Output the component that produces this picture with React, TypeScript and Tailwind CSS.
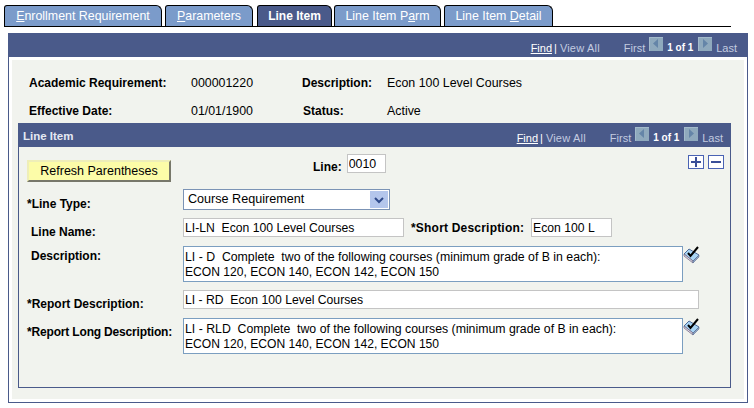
import React from 'react';

const Nav = ({ right }: { right: string }) => (
  <div className={`ml-auto flex items-start self-stretch whitespace-nowrap text-[11px] font-normal leading-[14px] text-[#c3cbe0] ${right}`}>
    <span className="mt-[8px] text-white underline">Find</span>
    <span className="ml-[2px] mr-[3px] mt-[8px] text-white">|</span>
    <span className="mt-[8px] tracking-[0.2px]">View All</span>
    <span className="ml-[24px] mt-[8px]">First</span>
    <Arrow dir="left" />
    <span className="ml-[4px] mr-[1px] mt-[8px] w-[26px] text-[10px] font-bold text-white">1 of 1</span>
    <Arrow dir="right" />
    <span className="ml-[4px] mt-[8px]">Last</span>
  </div>
);

const Arrow = ({ dir }: { dir: 'left' | 'right' }) => (
  <svg width="14" height="14" viewBox="0 0 14 14" className="ml-1 mt-[4px]">
    <rect width="14" height="14" fill="#8fa9bd" />
    <path d="M0 0h14v1H1v13H0z" fill="#a3bacb" />
    <path d={dir === 'left' ? 'M9 2v9L4 6.5z' : 'M5 2v9l5-4.5z'} fill="#6585a8" />
  </svg>
);

const Book = () => (
  <svg width="17" height="18" viewBox="0 0 17 18" className="shrink-0">
    <path d="M1 8l5-5 10 6-6 6z" fill="#a8d4f4" stroke="#4f6a98" />
    <path d="M1 8l9 7v2L1 10z" fill="#dcd4e4" stroke="#77718a" strokeWidth="0.8" />
    <path d="M10 15l6-6v2l-6 6z" fill="#8fa6c4" stroke="#5d6f94" strokeWidth="0.6" />
    <path d="M5 7l2.5 3L15 1" fill="none" stroke="#000" strokeWidth="2" />
  </svg>
);

const Label = ({ className = '', children }: { className?: string; children: React.ReactNode }) => (
  <span className={`font-bold text-black text-[12px] ${className}`}>{children}</span>
);

const LongText = ({ first, second }: { first: string; second: string }) => (
  <div className="h-[36px] w-[500px] whitespace-pre border border-[#7b9ec0] bg-white pl-[1px] pt-[3px] leading-[15px]">
    <div className="text-[12.3px]">{first}</div>
    <div className="text-[12.1px]">{second}</div>
  </div>
);

const App = () => {
  const tab = 'flex h-[21px] items-center justify-center rounded-tl-[3px] rounded-tr-[6px] border border-b-0 border-black';

  return (
    <div className="h-[408px] w-[754px] overflow-hidden bg-white font-['Liberation_Sans',Arial,sans-serif] text-[12px] text-black">
      {/* tabs */}
      <div className="ml-[4px] mt-[5px] flex h-[22px] w-[727px] border-b border-black text-[12.4px] text-white">
        <div className={`${tab} w-[158px] bg-[#7b9bca]`}>
          <span><u>E</u>nrollment Requirement</span>
        </div>
        <div className={`${tab} ml-[3px] w-[88px] bg-[#7b9bca]`}>
          <span><u>P</u>arameters</span>
        </div>
        <div className={`${tab} ml-[4px] w-[75px] bg-[#4a5a8a] text-[12px] font-bold`}>
          Line Item
        </div>
        <div className={`${tab} ml-[2px] w-[107px] bg-[#7b9bca]`}>
          <span>Line Item P<u>a</u>rm</span>
        </div>
        <div className={`${tab} ml-[3px] w-[109px] bg-[#7b9bca]`}>
          <span>Line Item <u>D</u>etail</span>
        </div>
      </div>

      {/* outer panel */}
      <div className="ml-[8px] mt-[6px] h-[370px] w-[740px] border border-t-0 border-[#4a5a8a]">
        <div className="flex h-[24px] items-center bg-[#4a5a8a]">
          <Nav right="mr-[10px]" />
        </div>
        <div className="mx-[3px] mt-[3px] h-[339px] bg-[#f1f3ee] pt-[14px]">
          <div className="flex h-[18px] items-center">
            <Label className="ml-[17px] w-[162px]">Academic Requirement:</Label>
            <span className="w-[111px] text-[12.4px]">000001220</span>
            <Label className="w-[85px]">Description:</Label>
            <span className="text-[12.4px]">Econ 100 Level Courses</span>
          </div>
          <div className="mt-[10px] flex h-[18px] items-center">
            <Label className="ml-[17px] w-[162px]">Effective Date:</Label>
            <span className="w-[112px] text-[12.4px]">01/01/1900</span>
            <Label className="w-[84px]">Status:</Label>
            <span className="text-[12.4px]">Active</span>
          </div>

          {/* inner panel */}
          <div className="ml-[6px] mt-[3px] h-[265px] w-[713px] border border-t-0 border-[#4a5a8a]">
            <div className="flex h-[24px] items-center bg-[#4a5a8a] pl-[4px] text-[11.5px] font-bold text-[#e4e8f2]">
              <span className="mt-[4px]">Line Item</span>
              <Nav right="mr-[7px]" />
            </div>

            <div className="h-[240px]">
              <div className="flex h-[42px] pt-[7px]">
                <button className="ml-[8px] mt-[6px] h-[22px] w-[144px] border-2 border-b-[#77776a] border-l-[#eeeeb8] border-r-[#77776a] border-t-[#eeeeb8] bg-[#fcfca8] text-[12.5px]">
                  Refresh Parentheses
                </button>
                <Label className="ml-[142px] mt-[4px]">Line:</Label>
                <input readOnly value="0010" className="ml-[5px] h-[19px] w-[39px] border border-[#c4c4c4] bg-white px-[1px] text-[12.4px] outline-none" />
                <div className="ml-[302px] mt-[1px] flex h-[14px] gap-[4px]">
                  <span className="flex h-[14px] w-[16px] items-center justify-center border border-[#4a63b4] bg-white text-[#3a4f98]">
                    <svg width="10" height="10" viewBox="0 0 10 10"><path d="M4 0h2v4h4v2H6v4H4V6H0V4h4z" fill="currentColor" /></svg>
                  </span>
                  <span className="flex h-[14px] w-[16px] items-center justify-center border border-[#4a63b4] bg-white text-[#3a4f98]">
                    <svg width="10" height="10" viewBox="0 0 10 10"><path d="M0 4h10v2H0z" fill="currentColor" /></svg>
                  </span>
                </div>
              </div>

              <div className="flex h-[21px] items-start">
                <Label className="ml-[8px] mt-[6px] w-[156px]">*Line Type:</Label>
                <div className="flex h-[21px] w-[207px] items-center justify-between border border-[#7b93b5] bg-white pl-[4px] pr-[1px] text-[12.6px]">
                  <span>Course Requirement</span>
                  <span className="flex h-[17px] w-[18px] items-center justify-center bg-[#b4c6ec] text-[#2f4a8a]">
                    <svg width="10" height="8" viewBox="0 0 10 8"><path d="M1 2l4 4 4-4" fill="none" stroke="currentColor" strokeWidth="2" /></svg>
                  </span>
                </div>
              </div>

              <div className="mt-[8px] flex h-[19px] items-start">
                <Label className="ml-[12px] mt-[5px] w-[152px]">Line Name:</Label>
                <input readOnly value="LI-LN  Econ 100 Level Courses" className="h-[19px] w-[221px] border border-[#c4c4c4] bg-white px-[1px] text-[12.2px] outline-none" />
                <Label className="ml-[7px] mt-[1px] w-[120px] tracking-[0.2px]">*Short Description:</Label>
                <input readOnly value="Econ 100 L" className="h-[19px] w-[81px] border border-[#c4c4c4] bg-white px-[1px] text-[12.2px] outline-none" />
              </div>

              <div className="mt-[9px] flex items-start">
                <Label className="ml-[12px] mt-[1px] w-[152px]">Description:</Label>
                <LongText
                  first="LI - D  Complete  two of the following courses (minimum grade of B in each):"
                  second="ECON 120, ECON 140, ECON 142, ECON 150"
                />
                <Book />
              </div>

              <div className="mt-[8px] flex h-[19px] items-start">
                <Label className="ml-[8px] mt-[5px] w-[156px]">*Report Description:</Label>
                <input readOnly value="LI - RD  Econ 100 Level Courses" className="h-[19px] w-[516px] border border-[#c4c4c4] bg-white px-[1px] text-[12.2px] outline-none" />
              </div>

              <div className="mt-[9px] flex items-start">
                <Label className="ml-[8px] mt-[5px] w-[156px] tracking-[-0.17px]">*Report Long Description:</Label>
                <LongText
                  first="LI - RLD  Complete  two of the following courses (minimum grade of B in each):"
                  second="ECON 120, ECON 140, ECON 142, ECON 150"
                />
                <Book />
              </div>
            </div>
          </div>
        </div>
      </div>
    </div>
  );
};

export default App;
